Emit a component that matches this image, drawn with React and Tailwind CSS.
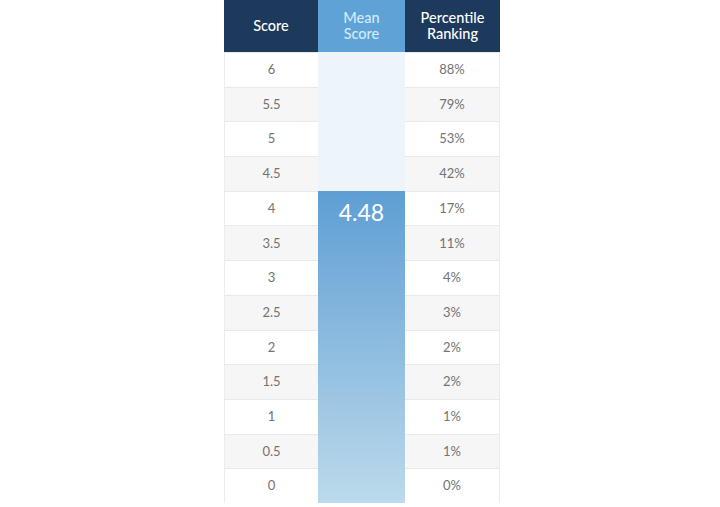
import React from 'react';

const rows = [
    ['6', '88%'],
    ['5.5', '79%'],
    ['5', '53%'],
    ['4.5', '42%'],
    ['4', '17%'],
    ['3.5', '11%'],
    ['3', '4%'],
    ['2.5', '3%'],
    ['2', '2%'],
    ['1.5', '2%'],
    ['1', '1%'],
    ['0.5', '1%'],
    ['0', '0%'],
];

const Cell = ({ value, index, side }) => (
    <div
        className={`h-[34.7px] flex items-center justify-center text-[13px] text-[#737373] border-t border-[#e9e9e9] ${side} ${index % 2 === 1 ? 'bg-[#f6f6f6]' : 'bg-white'}`}
    >
        {value}
    </div>
);

const App = () => {
    return (
        <div className="w-[720px] h-[507px] bg-white pl-[224px]" style={{ fontFamily: 'Lato, "Open Sans", sans-serif' }}>
            <div className="w-[276px]">
                {/* header */}
                <div className="flex h-[52px] text-[14.5px] leading-[16px] text-center font-medium">
                    <div className="w-[94px] bg-[#1d3a5c] text-white flex items-center justify-center">Score</div>
                    <div className="w-[87px] bg-[#5fa3d6] text-[#d3eafa] flex items-center justify-center">
                        Mean<br />Score
                    </div>
                    <div className="w-[95px] bg-[#1d3a5c] text-white flex items-center justify-center">
                        Percentile<br />Ranking
                    </div>
                </div>

                {/* body */}
                <div className="flex">
                    <div className="w-[94px]">
                        {rows.map((r, i) => (
                            <Cell key={r[0]} value={r[0]} index={i} side="border-l border-l-[#ececec]" />
                        ))}
                    </div>
                    <div className="w-[87px] flex flex-col">
                        <div className="h-[138.8px] bg-[#eef5fa]" />
                        <div className="flex-1 bg-gradient-to-b from-[#5e9ed3] to-[#bcdaeb] flex justify-center">
                            <span className="text-[23px] text-white mt-[7px] leading-[28px]">4.48</span>
                        </div>
                    </div>
                    <div className="w-[95px]">
                        {rows.map((r, i) => (
                            <Cell key={r[0]} value={r[1]} index={i} side="border-r border-r-[#ececec]" />
                        ))}
                    </div>
                </div>
            </div>
        </div>
    );
};

export default App;
